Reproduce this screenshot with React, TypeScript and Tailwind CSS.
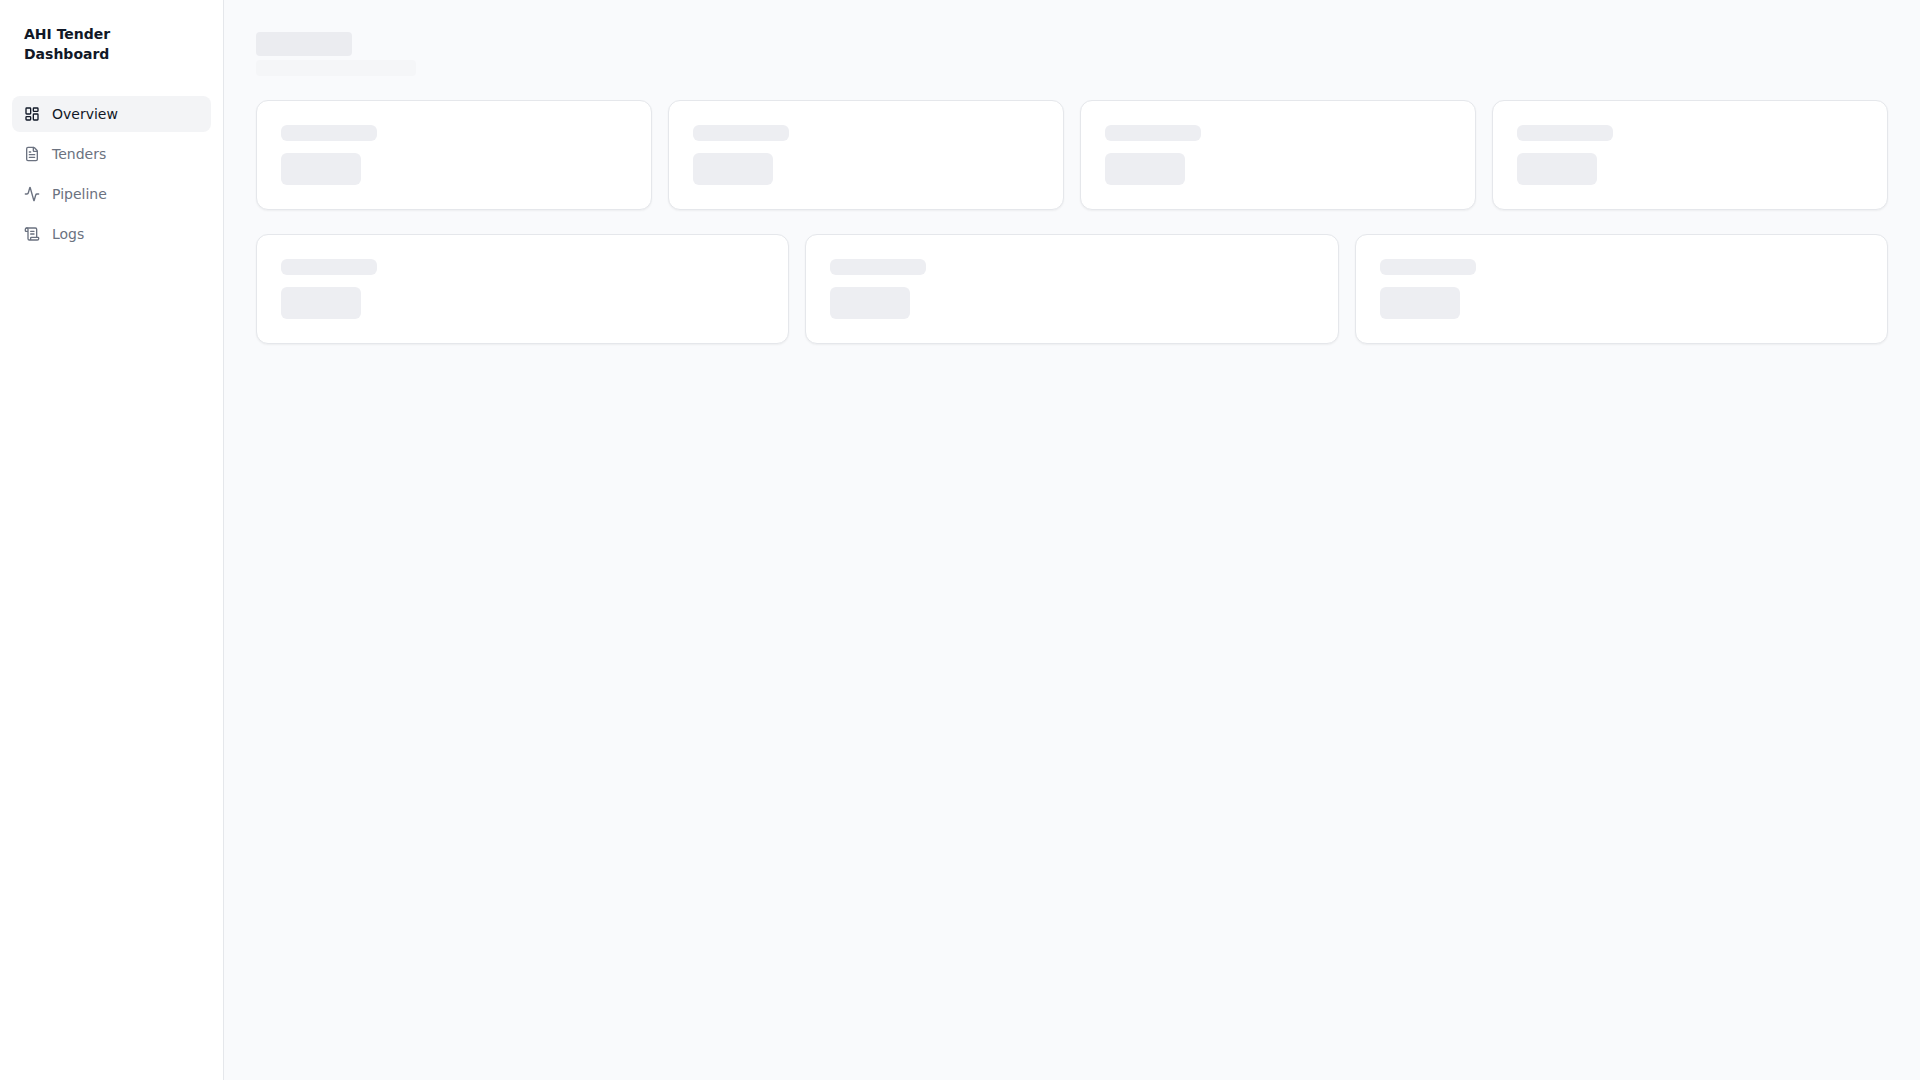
import { LayoutDashboard, FileText, Activity, ScrollText } from 'lucide-react'
import { clsx } from 'clsx'

const NAV_ITEMS = [
  { label: 'Overview', href: '#overview', icon: LayoutDashboard, active: true },
  { label: 'Tenders', href: '#tenders', icon: FileText, active: false },
  { label: 'Pipeline', href: '#pipeline', icon: Activity, active: false },
  { label: 'Logs', href: '#logs', icon: ScrollText, active: false },
]

function Sidebar() {
  return (
    <aside className="w-56 shrink-0 border-r border-[#e5e7eb] bg-white">
      <div className="p-6">
        <h1 className="text-sm font-bold text-[#111827]">AHI Tender Dashboard</h1>
      </div>
      <nav className="space-y-1 px-3 pt-2">
        {NAV_ITEMS.map(({ label, href, icon: Icon, active }) => (
          <a
            key={label}
            href={href}
            className={clsx(
              'flex items-center gap-3 rounded-lg px-3 py-2 text-sm transition-colors',
              active ? 'bg-[#f3f4f6] text-[#111827]' : 'text-[#6b7280] hover:bg-gray-50',
            )}
          >
            <Icon size={16} />
            {label}
          </a>
        ))}
      </nav>
    </aside>
  )
}

function SkeletonCard() {
  return (
    <div className="rounded-xl border border-[#e5e7eb] bg-white p-6 shadow-xs">
      <div className="mb-3 h-4 w-24 rounded-md bg-[#edeef2]" />
      <div className="h-8 w-20 rounded-md bg-[#edeef2]" />
    </div>
  )
}

export default function App() {
  return (
    <div className="flex min-h-screen bg-[#f9fafc] font-['DejaVu_Sans',sans-serif]">
      <Sidebar />
      <main className="min-w-0 flex-1 space-y-6 p-8" aria-busy="true">
        {/* Page title */}
        <div>
          <div className="h-6 w-24 rounded bg-[#ebecf0]" />
          <div className="mt-1 h-4 w-40 rounded bg-[#f5f6f8]" />
        </div>

        <div className="grid grid-cols-4 gap-4">
          {[0, 1, 2, 3].map(i => <SkeletonCard key={i} />)}
        </div>

        <div className="grid grid-cols-3 gap-4">
          {[0, 1, 2].map(i => <SkeletonCard key={i} />)}
        </div>
      </main>
    </div>
  )
}
